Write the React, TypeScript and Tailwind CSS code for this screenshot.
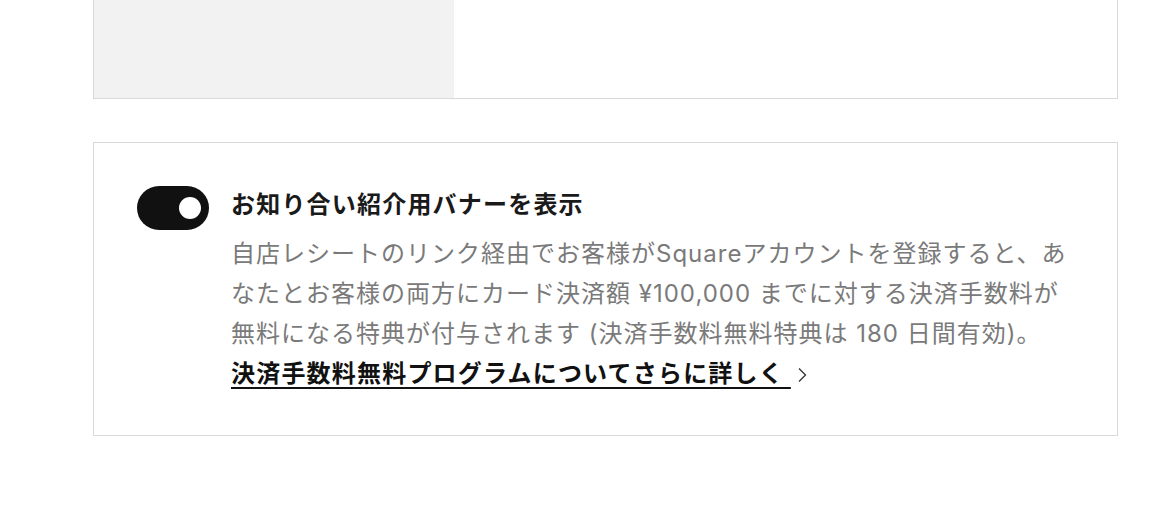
import React, { useState } from 'react';

const font = { fontFamily: 'Inter, "Noto Sans CJK JP", sans-serif' };

export default function App() {
  const [on, setOn] = useState(true);

  return (
    <div className="min-h-screen bg-white pb-[70px]" style={font}>
      {/* Previous card (cut off at top) */}
      <div className="ml-[93px] w-[1025px] h-[99px] border-x border-b border-[#d9d9d9] bg-white">
        <div className="w-[360px] h-full bg-[#f2f2f2]"></div>
      </div>

      {/* Referral banner card */}
      <div className="ml-[93px] mt-[43px] w-[1025px] border border-[#d9d9d9] pt-[43px] px-[43px] pb-[41px] flex items-start gap-[22px]">
        <button
          type="button"
          onClick={() => setOn(!on)}
          className={`shrink-0 w-[72px] h-[44px] rounded-full flex items-center px-[8px] ${
            on ? 'bg-[#111111] justify-end' : 'bg-[#cccccc] justify-start'
          }`}
        >
          <span className="block w-[22px] h-[22px] rounded-full bg-white"></span>
        </button>

        <div className="flex-1 pt-[3px]">
          <h3 className="text-[24px] leading-[32px] font-bold text-[#1a1a1a] tracking-[1.2px]">
            お知り合い紹介用バナーを表示
          </h3>
          <p className="mt-[13px] text-[24px] leading-[40px] text-[#7a7a7a] tracking-[1px]">
            自店レシートのリンク経由でお客様がSquareアカウントを登録すると、あなたとお客様の両方にカード決済額 ¥100,000 までに対する決済手数料が無料になる特典が付与されます (決済手数料無料特典は 180 日間有効)。
          </p>
          <a href="#" className="inline-flex items-center text-[24px] leading-[40px] font-bold text-[#111111] tracking-[1.2px]">
            <span className="underline decoration-2 underline-offset-[5px]">決済手数料無料プログラムについてさらに詳しく&nbsp;</span>
            <svg width="10" height="16" viewBox="0 0 10 16" className="ml-[6px] mt-[2px]" fill="none">
              <path d="M2 1.5 L8.5 8 L2 14.5" stroke="#333" strokeWidth="1.3" />
            </svg>
          </a>
        </div>
      </div>
    </div>
  );
}
